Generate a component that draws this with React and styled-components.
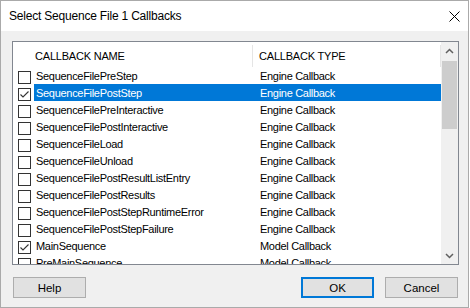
import styled, { createGlobalStyle } from 'styled-components';

const GlobalStyle = createGlobalStyle`
  html, body {
    margin: 0;
    padding: 0;
    background: #ffffff;
  }
  * {
    box-sizing: border-box;
  }
`;

const callbacks = [
  { name: 'SequenceFilePreStep', type: 'Engine Callback', checked: false },
  { name: 'SequenceFilePostStep', type: 'Engine Callback', checked: true, selected: true },
  { name: 'SequenceFilePreInteractive', type: 'Engine Callback', checked: false },
  { name: 'SequenceFilePostInteractive', type: 'Engine Callback', checked: false },
  { name: 'SequenceFileLoad', type: 'Engine Callback', checked: false },
  { name: 'SequenceFileUnload', type: 'Engine Callback', checked: false },
  { name: 'SequenceFilePostResultListEntry', type: 'Engine Callback', checked: false },
  { name: 'SequenceFilePostResults', type: 'Engine Callback', checked: false },
  { name: 'SequenceFilePostStepRuntimeError', type: 'Engine Callback', checked: false },
  { name: 'SequenceFilePostStepFailure', type: 'Engine Callback', checked: false },
  { name: 'MainSequence', type: 'Model Callback', checked: true },
  { name: 'PreMainSequence', type: 'Model Callback', checked: false },
];

const Window = styled.div`
  width: 469px;
  height: 308px;
  border: 1px solid #aaaaaa;
  display: flex;
  flex-direction: column;
  font-family: "Liberation Sans", Arial, sans-serif;
  color: #000;
`;

const TitleBar = styled.div`
  height: 30px;
  flex: none;
  background: #ffffff;
  display: flex;
  align-items: center;
  justify-content: space-between;
  padding: 0 8px 0 8px;
  font-size: 12px;
  letter-spacing: -0.2px;
`;

const CloseIcon = styled.svg`
  width: 11px;
  height: 11px;
`;

const Body = styled.div`
  flex: 1;
  background: #f0f0f0;
  padding: 10px 9px 9px 11px;
  display: flex;
  flex-direction: column;
`;

const ListView = styled.div`
  height: 224px;
  border: 1px solid #828790;
  background: #ffffff;
  display: flex;
  overflow: hidden;
`;

const ListContent = styled.div`
  flex: 1;
  overflow: hidden;
`;

const Header = styled.div`
  height: 25px;
  display: grid;
  grid-template-columns: 240px 1fr;
  font-size: 11px;
  letter-spacing: -0.2px;
`;

const HeaderCell = styled.div`
  display: flex;
  align-items: center;
  padding-left: ${(p) => p.$pad}px;
  margin-top: 3px;
  border-right: 1px solid #e5e5e5;
`;

const Row = styled.div`
  height: 17px;
  display: flex;
  font-size: 11px;
  letter-spacing: -0.3px;
`;

const CheckCell = styled.div`
  width: 21px;
  flex: none;
  padding-left: 5px;
  padding-top: 4px;
`;

const CheckBox = styled.div`
  width: 13px;
  height: 13px;
  border: 1px solid #333333;
  background: #ffffff;
  display: flex;
  align-items: center;
  justify-content: center;
`;

const RowBody = styled.div`
  flex: 1;
  display: grid;
  grid-template-columns: 219px 1fr;
  align-items: center;
  padding-top: 1px;
  background: ${(p) => (p.$selected ? '#0078d7' : 'transparent')};
  color: ${(p) => (p.$selected ? '#ffffff' : '#000000')};
`;

const NameText = styled.span`
  padding-left: 2px;
  white-space: nowrap;
`;

const TypeText = styled.span`
  padding-left: 7px;
  white-space: nowrap;
`;

const ScrollBar = styled.div`
  width: 17px;
  flex: none;
  background: #f0f0f0;
  display: flex;
  flex-direction: column;
`;

const ScrollButton = styled.div`
  height: 17px;
  flex: none;
  display: flex;
  align-items: center;
  justify-content: center;
`;

const Thumb = styled.div`
  height: 68px;
  margin: 2px 1px 0 1px;
  background: #cdcdcd;
`;

const Track = styled.div`
  flex: 1;
`;

const Footer = styled.div`
  margin-top: 12px;
  padding: 0 1px 0 1px;
  display: flex;
  align-items: center;
  gap: 11px;
`;

const Spacer = styled.div`
  flex: 1;
`;

const Button = styled.button`
  width: 73px;
  height: 21px;
  padding: 0;
  background: #e1e1e1;
  border: ${(p) => (p.$default ? '2px solid #0078d7' : '1px solid #adadad')};
  font-family: "Liberation Sans", Arial, sans-serif;
  font-size: 11.5px;
  color: #000;
`;

function Chevron({ up }) {
  return (
    <svg width="9" height="6" viewBox="0 0 9 6">
      <path
        d={up ? 'M1 5 L4.5 1.5 L8 5' : 'M1 1 L4.5 4.5 L8 1'}
        fill="none"
        stroke="#606060"
        strokeWidth="1.5"
      />
    </svg>
  );
}

export default function App() {
  return (
    <>
      <GlobalStyle />
      <Window>
        <TitleBar>
          <span>Select Sequence File 1 Callbacks</span>
          <CloseIcon viewBox="0 0 11 11">
            <path d="M0.5 0.5 L10.5 10.5 M10.5 0.5 L0.5 10.5" stroke="#000" strokeWidth="1" />
          </CloseIcon>
        </TitleBar>
        <Body>
          <ListView>
            <ListContent>
              <Header>
                <HeaderCell $pad={22}>CALLBACK NAME</HeaderCell>
                <HeaderCell $pad={6}>CALLBACK TYPE</HeaderCell>
              </Header>
              {callbacks.map((cb) => (
                <Row key={cb.name}>
                  <CheckCell>
                    <CheckBox>
                      {cb.checked && (
                        <svg width="11" height="11" viewBox="0 0 11 11">
                          <path d="M1.5 5.5 L4 8 L9.5 2.5" fill="none" stroke="#333" strokeWidth="1.1" />
                        </svg>
                      )}
                    </CheckBox>
                  </CheckCell>
                  <RowBody $selected={cb.selected}>
                    <NameText>{cb.name}</NameText>
                    <TypeText>{cb.type}</TypeText>
                  </RowBody>
                </Row>
              ))}
            </ListContent>
            <ScrollBar>
              <ScrollButton>
                <Chevron up />
              </ScrollButton>
              <Thumb />
              <Track />
              <ScrollButton>
                <Chevron />
              </ScrollButton>
            </ScrollBar>
          </ListView>
          <Footer>
            <Button>Help</Button>
            <Spacer />
            <Button $default>OK</Button>
            <Button>Cancel</Button>
          </Footer>
        </Body>
      </Window>
    </>
  );
}
